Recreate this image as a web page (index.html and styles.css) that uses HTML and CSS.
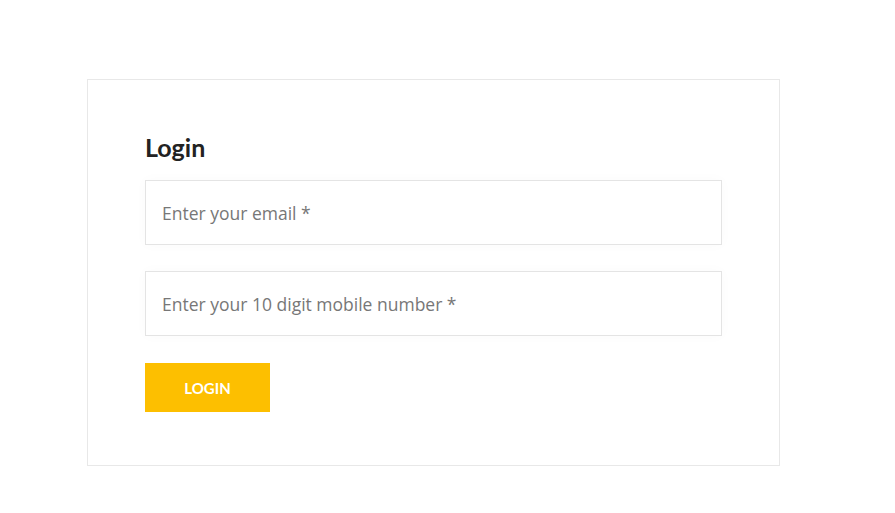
FILE: index.html
```html
<!DOCTYPE html>
<html lang="en">
<head>
    <meta charset="UTF-8">
    <meta name="viewport" content="width=device-width, initial-scale=1.0">
    <title>Login</title>
    <link rel="stylesheet" href="styles.css">
</head>
<body>

    <!-- Login card -->
    <div class="login-box">
        <h2>Login</h2>

        <form class="login-form" onsubmit="return false;">
            <input type="email" placeholder="Enter your email *">
            <input type="tel" placeholder="Enter your 10 digit mobile number *">
            <button type="submit">LOGIN</button>
        </form>
    </div>

</body>
</html>
```

FILE: styles.css
```css
body {
    margin: 0;
    background-color: #fff;
    font-family: "Open Sans", sans-serif;
}

/* Card holding the form */
.login-box {
    box-sizing: border-box;
    width: 693px;
    margin: 79px 0 0 87px;
    padding: 50px 57px 53px;
    border: 1px solid #e8e8e8;
}

.login-box h2 {
    margin: 0 0 16px 0;
    font-family: Lato, sans-serif;
    font-weight: 700;
    font-size: 25px;
    line-height: 34px;
    color: #222;
}

.login-form {
    display: flex;
    flex-direction: column;
    align-items: flex-start;
}

.login-form input {
    box-sizing: border-box;
    width: 577px;
    height: 65px;
    margin-bottom: 26px;
    padding: 0 16px;
    border: 1px solid #e4e4e4;
    box-shadow: 0 0 12px rgba(0,0,0,0.025);
    font-family: "Open Sans", sans-serif;
    font-size: 17.5px;
    color: #333;
    outline: none;
}

.login-form input::placeholder {
    color: #777;
}

.login-form button {
    width: 125px;
    height: 49px;
    margin-top: 1px;
    border: none;
    background-color: #fdbf00;
    color: #fff;
    font-family: Lato, sans-serif;
    font-weight: 700;
    font-size: 15px;
    cursor: pointer;
}
```
